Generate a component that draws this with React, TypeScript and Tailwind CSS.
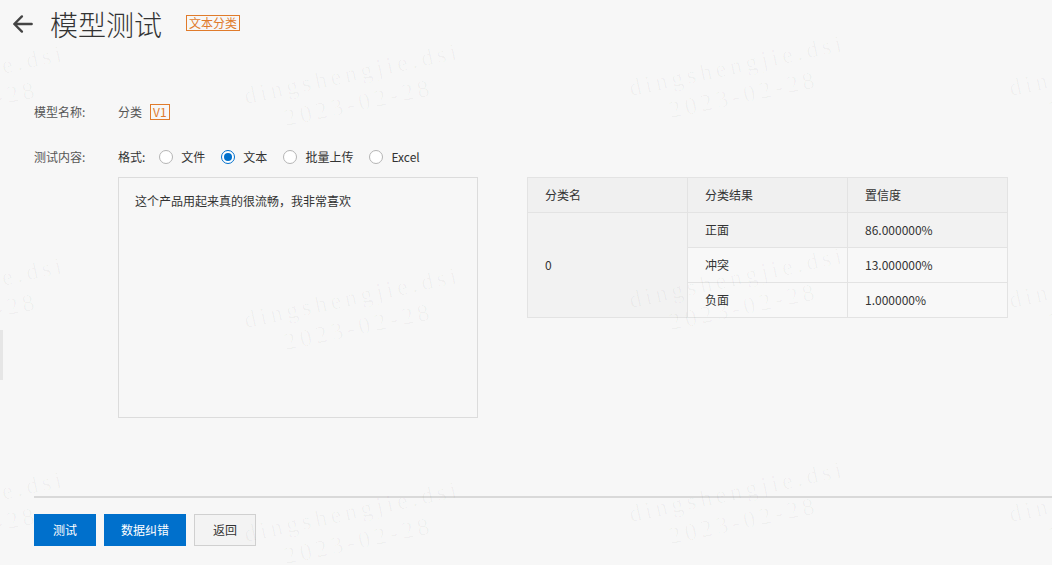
import React from "react";

const font = { fontFamily: '"Noto Sans CJK SC", "Noto Sans", sans-serif' };

const marks = [
  { x: -150, y: 60 }, { x: 245, y: 58 }, { x: 630, y: 50 }, { x: 1010, y: 50 },
  { x: -150, y: 272 }, { x: 245, y: 282 }, { x: 630, y: 262 }, { x: 1010, y: 262 },
  { x: -150, y: 486 }, { x: 245, y: 496 }, { x: 630, y: 476 }, { x: 1010, y: 476 },
];

function Watermarks() {
  return (
    <div className="pointer-events-none absolute inset-0 overflow-hidden">
      {marks.map((m, i) => (
        <div
          key={i}
          className="absolute -rotate-[12deg] text-center text-[24px] leading-[30px] tracking-[4px] text-black/[0.03]"
          style={{ left: m.x, top: m.y, fontFamily: '"Liberation Serif", "DejaVu Serif", serif' }}
        >
          <div>dingshengjie.dsi</div>
          <div>2023-02-28</div>
        </div>
      ))}
    </div>
  );
}

function Radio({ label, checked }: { label: string; checked?: boolean }) {
  return (
    <label className="flex items-center gap-2 mr-4">
      <span
        className={
          checked
            ? "flex h-[14px] w-[14px] items-center justify-center rounded-full border border-[#0070cc] bg-white"
            : "h-[14px] w-[14px] rounded-full border border-[#b5b5b5] bg-white"
        }
      >
        {checked && <span className="h-[8px] w-[8px] rounded-full bg-[#0070cc]" />}
      </span>
      <span className="text-[12px] text-[#333]">{label}</span>
    </label>
  );
}

export default function App() {
  const cell = "h-[35px] border border-[#e3e3e3] pl-[17px] text-left font-normal text-[12px] text-[#333]";
  return (
    <div className="relative h-[565px] w-[1052px] overflow-hidden bg-[#f7f7f7]" style={font}>
      <div className="absolute left-0 top-[330px] h-[50px] w-[3px] bg-[#e6e6e6]" />

      <div className="flex h-[40px] items-center pl-[10px] pt-[8px]">
        <svg width="26" height="26" viewBox="0 0 24 24" fill="none" stroke="#444" strokeWidth="2.2" strokeLinecap="round" strokeLinejoin="round">
          <path d="M20 12H4M11 5l-7 7 7 7" />
        </svg>
        <h1 className="ml-[14px] text-[28px] font-light leading-[34px] text-[#333]">模型测试</h1>
        <span className="ml-[24px] mt-[-2px] border border-[#e07b2b] px-[2px] text-[12px] leading-[14px] text-[#e07b2b]">文本分类</span>
      </div>

      <div className="pl-[34px]">
        <div className="mt-[64px] flex h-[16px] items-center">
          <span className="w-[84px] text-[12px] text-[#555]">模型名称:</span>
          <span className="text-[12px] text-[#555]">分类</span>
          <span className="ml-[8px] border border-[#e07b2b] px-[2px] text-[12px] leading-[14px] text-[#e07b2b]">V1</span>
        </div>

        <div className="mt-[29px] flex h-[16px] items-center">
          <span className="w-[84px] text-[12px] text-[#555]">测试内容:</span>
          <span className="mr-[14px] text-[12px] text-[#333]">格式:</span>
          <Radio label="文件" />
          <Radio label="文本" checked />
          <Radio label="批量上传" />
          <Radio label="Excel" />
        </div>

        <div className="mt-[12px] flex pl-[84px]">
          <div className="h-[241px] w-[360px] border border-[#dcdcdc] bg-[#f7f7f7] px-[16px] py-[14px] text-[12px] text-[#333]">
            这个产品用起来真的很流畅，我非常喜欢
          </div>

          <table className="ml-[49px] h-[141px] w-[481px] border-collapse self-start">
            <thead>
              <tr className="bg-[#f0f0f0]">
                <th className={cell + " w-[160px]"}>分类名</th>
                <th className={cell + " w-[160px]"}>分类结果</th>
                <th className={cell + " w-[160px]"}>置信度</th>
              </tr>
            </thead>
            <tbody>
              <tr className="bg-[#f2f2f2]">
                <td rowSpan={3} className={cell + " bg-[#f2f2f2]"}>0</td>
                <td className={cell}>正面</td>
                <td className={cell}>86.000000%</td>
              </tr>
              <tr className="bg-[#f8f8f8]">
                <td className={cell}>冲突</td>
                <td className={cell}>13.000000%</td>
              </tr>
              <tr className="bg-[#f8f8f8]">
                <td className={cell}>负面</td>
                <td className={cell}>1.000000%</td>
              </tr>
            </tbody>
          </table>
        </div>

        <div className="mt-[78px] h-[2px] bg-[#d9d9d9]" />

        <div className="mt-[16px] flex gap-[8px]">
          <button className="h-[32px] w-[62px] bg-[#0070cc] text-[12px] text-white">测试</button>
          <button className="h-[32px] w-[82px] bg-[#0070cc] text-[12px] text-white">数据纠错</button>
          <button className="h-[32px] w-[62px] border border-[#d0d0d0] bg-[#f3f3f3] text-[12px] text-[#333]">返回</button>
        </div>
      </div>

      <Watermarks />
    </div>
  );
}
